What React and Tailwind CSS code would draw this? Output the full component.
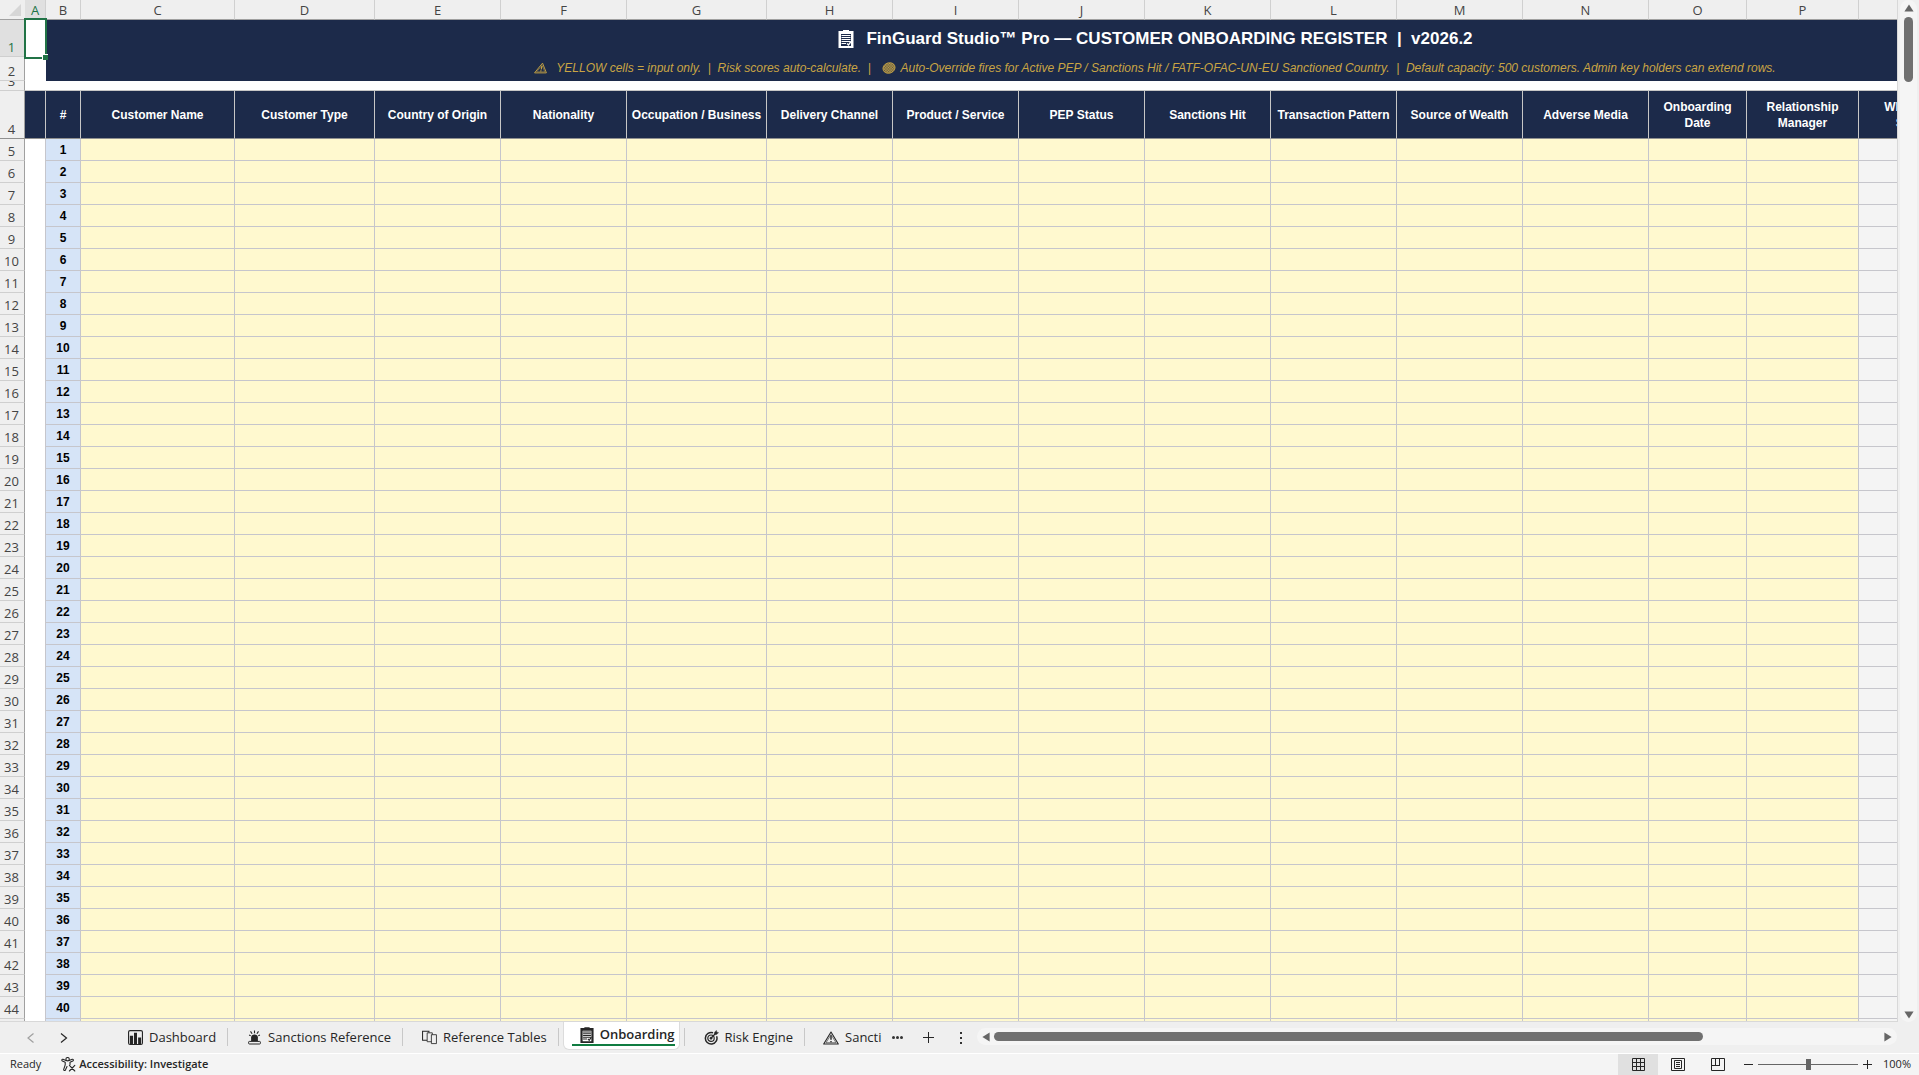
import React, { useState } from "react";
import clsx from "clsx";

const columns = [
    { letter: "A", label: "", width: "w-[21px]" },
    { letter: "B", label: "#", width: "w-[35px]" },
    { letter: "C", label: "Customer Name", width: "w-[154px]" },
    { letter: "D", label: "Customer Type", width: "w-[140px]" },
    { letter: "E", label: "Country of Origin", width: "w-[126px]" },
    { letter: "F", label: "Nationality", width: "w-[126px]" },
    { letter: "G", label: "Occupation / Business", width: "w-[140px]" },
    { letter: "H", label: "Delivery Channel", width: "w-[126px]" },
    { letter: "I", label: "Product / Service", width: "w-[126px]" },
    { letter: "J", label: "PEP Status", width: "w-[126px]" },
    { letter: "K", label: "Sanctions Hit", width: "w-[126px]" },
    { letter: "L", label: "Transaction Pattern", width: "w-[126px]" },
    { letter: "M", label: "Source of Wealth", width: "w-[126px]" },
    { letter: "N", label: "Adverse Media", width: "w-[126px]" },
    { letter: "O", label: "Onboarding\nDate", width: "w-[98px]" },
    { letter: "P", label: "Relationship\nManager", width: "w-[112px]" },
    { letter: "", label: "WL Match\nScore", width: "w-[108px]", computed: true },
    { letter: "", label: "", width: "w-[298px]", computed: true },
];

const customers = Array.from({ length: 41 }, (_, i) => i + 1);

/* Icons */
const ClipboardIcon = ({ className, paper = "none" }) => (
    <svg viewBox="0 0 16 18" className={className} aria-hidden="true">
        <path fill="currentColor" fillRule="evenodd" d="M.5 1H5V0h6v1h4.500v17H.5zM3 4v12h10V4z" />
        <path fill={paper} d="M3 4h10v12H3z" />
        <path stroke="currentColor" strokeWidth="1.2" d="M3.500 5.500h9M3.500 7.500h9M3.500 9.500h9M3.500 11.500h9M3.500 13.500h4.500" />
        <path stroke="currentColor" strokeWidth="1.300" fill="none" d="M9 13.500l1.500 1.500L13 11.500" />
    </svg>
);

const WarningIcon = ({ className }) => (
    <svg viewBox="0 0 16 14" className={className} fill="none" stroke="currentColor" aria-hidden="true">
        <path strokeWidth="1.1" strokeLinejoin="round" d="M8 1L15.3 13H.7z" />
        <path strokeWidth=".6" strokeLinejoin="round" d="M8 3.6L13 11.7H3z" />
        <path strokeWidth="1.4" d="M8 4.6v4.2M8 9.9v1.4" />
    </svg>
);

const DiscIcon = ({ className }) => (
    <svg viewBox="0 0 14 12" className={className} aria-hidden="true">
        <defs>
            <pattern id="hatch" width="2" height="2" patternUnits="userSpaceOnUse" patternTransform="rotate(35)">
                <path d="M0 0h1v1H0zM1 1h1v1H1z" fill="currentColor" />
            </pattern>
        </defs>
        <ellipse cx="7" cy="6" rx="6.2" ry="5.2" fill="currentColor" fillOpacity=".35" transform="rotate(-20 7 6)" />
        <ellipse cx="7" cy="6" rx="6.2" ry="5.2" fill="url(#hatch)" stroke="currentColor" strokeWidth=".7" transform="rotate(-20 7 6)" />
    </svg>
);

const ChartIcon = ({ className }) => (
    <svg viewBox="0 0 16 16" className={className} aria-hidden="true">
        <rect x=".6" y=".6" width="14.8" height="14.8" rx="1.6" fill="none" stroke="currentColor" strokeWidth="1.2" />
        <path fill="currentColor" d="M2 6h3.4v9H2zM6.4 3h3.2v12H6.4zM10.8 8H14v7h-3.2z" />
    </svg>
);

const SirenIcon = ({ className }) => (
    <svg viewBox="0 0 14 15" className={className} aria-hidden="true">
        <path fill="currentColor" d="M3.6 11V7.6C3.6 5.6 5 4.4 7 4.4s3.4 1.2 3.4 3.2V11z" />
        <rect x="1.1" y="11.4" width="11.8" height="2.6" rx=".8" fill="none" stroke="currentColor" />
        <path stroke="currentColor" strokeWidth="1.1" d="M7 .4v2.8M3 1.4l1.6 2.4M11 1.4L9.4 3.8M1.6 5l1.600.8M12.400 5l-1.600.8" />
    </svg>
);

const CardsIcon = ({ className }) => (
    <svg viewBox="0 0 16 15" className={className} fill="none" stroke="currentColor" aria-hidden="true">
        <path strokeWidth="1.1" d="M5.500 10.500H.6V.8h6.800v1.700" />
        <path strokeWidth=".9" fill="#efefef" d="M5.500 2.500h5.500v9.500H5.500z" />
        <path strokeWidth=".9" fill="#efefef" d="M10 4.500h5.400v9.500H10z" />
    </svg>
);

const TargetIcon = ({ className }) => (
    <svg viewBox="0 0 15 15" className={className} fill="none" stroke="currentColor" aria-hidden="true">
        <path strokeWidth="1.5" d="M12.6 6.2A5.8 5.8 0 1 1 9 2.8" />
        <circle cx="7" cy="8.2" r="3.2" strokeWidth="1.2" />
        <circle cx="7" cy="8.2" r="1" fill="currentColor" />
        <path strokeWidth="1.3" d="M7 8.2l4.4-4.6" />
        <path fill="currentColor" strokeWidth=".4" d="M10.4 4.6V2.4L12.4.4l.4 1.8 1.8.4-2 2z" />
    </svg>
);

const AccessibilityIcon = () => (
    <svg viewBox="0 0 15 15" className="h-[15px] w-[15px]" fill="none" stroke="currentColor" strokeWidth="1.1" strokeLinejoin="round" strokeLinecap="round" aria-hidden="true">
        <circle cx="6.6" cy="2.2" r="1.7" />
        <path d="M5 3.4L2 2.3C.9 2 .4 3.4 1.4 3.9l2.8 1.3v2.6l-1.5 4.6c-.2 1.1 1.2 1.6 1.7.6L6 9.6M8.2 3.4l3-1.1c1.1-.3 1.6 1.1.6 1.6L9 5.2v2.2" />
        <path d="M8.4 8.4l5.4 5.6M13.8 8.4L8.4 14" />
    </svg>
);

const GridViewIcon = () => (
    <svg viewBox="0 0 13 13" className="h-[13px] w-[13px]" fill="none" stroke="currentColor" aria-hidden="true">
        <path d="M.5.5h12v12H.5zM4.5 0v13M8.5 0v13M0 4.5h13M0 8.5h13" />
    </svg>
);

const PageViewIcon = () => (
    <svg viewBox="0 0 14 13" className="h-[13px] w-[14px]" fill="none" stroke="currentColor" aria-hidden="true">
        <path d="M.5.5h13v12H.5zM3.5 2.5h7v8h-7zM5 4.5h4M5 6.5h4M5 8.5h4" />
    </svg>
);

const BreakViewIcon = () => (
    <svg viewBox="0 0 14 13" className="h-[13px] w-[14px]" fill="none" stroke="currentColor" aria-hidden="true">
        <path d="M.5.5h13v12H.5zM4.5 0v7.5M.5 7.5h8M8.5 0v8" />
    </svg>
);

const Triangle = ({ className }) => (
    <svg viewBox="0 0 10 8" className={clsx("h-2 w-[10px] text-[#666]", className)} aria-hidden="true">
        <path fill="currentColor" d="M5 0.4L9.6 7.6H.4z" />
    </svg>
);

const sheets = [
    { name: "Dashboard", icon: ChartIcon },
    { name: "Sanctions Reference", icon: SirenIcon },
    { name: "Reference Tables", icon: CardsIcon },
    { name: "Onboarding", icon: ClipboardIcon },
    { name: "Risk Engine", icon: TargetIcon },
];

const RowNumber = ({ children, active, className }) => (
    <th
        scope="row"
        className={clsx(
            "border-r border-b border-r-[#a0a0a0] p-0 pr-px pb-px text-center align-bottom font-['Open_Sans',sans-serif] text-[13px] leading-4 font-normal",
            active ? "bg-[#e0e0e0] text-[#217346]" : "bg-[#efefef] text-[#444]",
            className || "border-b-[#cfcfcf]"
        )}
    >
        {children}
    </th>
);

const Sheet = () => (
    <table className="w-[2265px] table-fixed border-separate border-spacing-0 bg-white font-['Liberation_Sans',sans-serif]">
        <colgroup>
            <col className="w-[25px]" />
            {columns.map((c, i) => (
                <col key={i} className={c.width} />
            ))}
        </colgroup>
        <thead>
            <tr className="h-5">
                <th className="border-b border-[#a0a0a0] bg-[#efefef] p-0">
                    <svg viewBox="0 0 12 12" className="ml-[9px] h-3 w-3" aria-hidden="true">
                        <path fill="#d6d6d6" d="M12 0v12H0z" />
                    </svg>
                </th>
                {columns.map((c, i) => (
                    <th
                        key={i}
                        scope="col"
                        className={clsx(
                            "border-r border-b border-r-[#d0d0d0] border-b-[#a0a0a0] p-0 font-['Open_Sans',sans-serif] text-[13px] leading-4 font-normal",
                            c.letter === "A" ? "bg-[#e0e0e0] text-[#217346]" : "bg-[#efefef] text-[#444]"
                        )}
                    >
                        {c.letter}
                    </th>
                ))}
            </tr>
        </thead>
        <tbody>
            <tr className="h-[37px]">
                <RowNumber active>1</RowNumber>
                <td className="relative p-0">
                    {/* Active cell outline */}
                    <div className="absolute -inset-x-[1px] -inset-y-[2px] border-2 border-[#217346]">
                        <span className="absolute -right-[3px] -bottom-[3px] h-[6px] w-[6px] border-t border-l border-white bg-[#217346]" />
                    </div>
                </td>
                <td colSpan={17} className="bg-[#1c2a4a] p-0 text-[17px] leading-5 font-bold text-white">
                    <div className="flex items-center justify-center">
                        <ClipboardIcon className="mr-3 h-[18px] w-4" paper="#1c2a4a" />
                        <span className="whitespace-pre">FinGuard Studio™ Pro — CUSTOMER ONBOARDING REGISTER  |  v2026.2</span>
                    </div>
                </td>
            </tr>
            <tr className="h-6">
                <RowNumber>2</RowNumber>
                <td className="p-0" />
                <td colSpan={17} className="bg-[#1c2a4a] p-0 pb-[2px] text-xs text-[#c9a544] italic">
                    <div className="flex items-center justify-center whitespace-pre">
                        <WarningIcon className="mr-2 h-3 w-[13px] -skew-x-12" />
                        <span>YELLOW cells = input only.  |  Risk scores auto-calculate.  |  </span>
                        <DiscIcon className="mr-1 ml-[5px] h-3 w-[14px]" />
                        <span>Auto-Override fires for Active PEP / Sanctions Hit / FATF-OFAC-UN-EU Sanctioned Country.  |  Default capacity: 500 customers. Admin key holders can extend rows.</span>
                    </div>
                </td>
            </tr>
            <tr className="h-[10px]">
                <RowNumber>
                    <div className="flex h-2 items-end justify-center overflow-hidden">3</div>
                </RowNumber>
                <td colSpan={18} className="border-b border-[#c6c6c6] p-0" />
            </tr>
            <tr className="h-12">
                <RowNumber className="border-b-[#909090]">4</RowNumber>
                {columns.map((c, i) => (
                    <th
                        key={i}
                        className="border-r border-b border-r-[#c6c6c6] border-b-[#909090] bg-[#1c2a4a] p-0 text-xs leading-4 font-bold whitespace-pre text-white"
                    >
                        {c.label}
                    </th>
                ))}
            </tr>
            {customers.map((n) => (
                <tr key={n} className="h-[22px]">
                    <RowNumber>{n + 4}</RowNumber>
                    {columns.map((c, i) => {
                        if (c.letter === "A") return <td key={i} className="border-r border-[#c6c6cc] p-0" />;
                        if (c.letter === "B")
                            return (
                                <td key={i} className="border-r border-b border-[#c6c6cc] bg-[#d6e4f7] p-0 text-center text-xs leading-4 font-bold text-black">
                                    {n}
                                </td>
                            );
                        return (
                            <td
                                key={i}
                                className={clsx("border-r border-b border-[#c6c6cc] p-0", c.computed ? "bg-[#f4f4f4]" : "bg-[#fff9cf]")}
                            />
                        );
                    })}
                </tr>
            ))}
        </tbody>
    </table>
);

const SheetTab = ({ sheet, active, onSelect }) => {
    const Icon = sheet.icon;
    if (active) {
        return (
            <button
                onClick={onSelect}
                className="mx-1 flex h-7 shrink-0 items-start rounded-b-md border-x border-b border-[#dcdcdc] bg-white pr-1 pl-2 font-semibold"
            >
                <span className="flex h-6 items-center gap-[6px] border-b-2 border-[#107c41] pt-1 pl-2">
                    <Icon className="h-4 w-[14px]" />
                    {sheet.name}
                </span>
            </button>
        );
    }
    return (
        <button onClick={onSelect} className="my-auto flex shrink-0 items-center gap-[6px] pr-[11px] pl-[19px]">
            <Icon className="h-[15px] w-[15px]" />
            {sheet.name}
        </button>
    );
};

const TabBar = () => {
    const [current, setCurrent] = useState("Onboarding");

    return (
        <div className="flex h-[31px] shrink-0 items-start bg-[#efefef] pr-[22px] text-[13px] text-[#262626]">
            <div className="flex h-full w-[109px] shrink-0 items-center gap-[25px] pl-[27px]">
                <button aria-label="Previous sheet" className="text-[#a0a0a0]">
                    <svg viewBox="0 0 8 10" className="h-[10px] w-2" fill="none" stroke="currentColor" strokeWidth="1.2">
                        <path d="M6.5.5L1 5l5.5 4.5" />
                    </svg>
                </button>
                <button aria-label="Next sheet">
                    <svg viewBox="0 0 8 10" className="h-[10px] w-2" fill="none" stroke="currentColor" strokeWidth="1.2">
                        <path d="M1 .5L6.5 5 1 9.5" />
                    </svg>
                </button>
            </div>
            <nav className="flex h-full shrink-0">
                {sheets.map((s) => (
                    <React.Fragment key={s.name}>
                        <SheetTab sheet={s} active={s.name === current} onSelect={() => setCurrent(s.name)} />
                        <span className="mt-[6px] h-[18px] w-px bg-[#c8c8c8]" />
                    </React.Fragment>
                ))}
                <button className="my-auto flex items-center gap-[6px] pl-[18px]">
                    <WarningIcon className="h-[14px] w-4" />
                    Sancti
                </button>
            </nav>
            <button aria-label="More sheets" className="ml-[10px] flex h-full items-center gap-px">
                <span className="h-[3px] w-[3px] rounded-full bg-[#333]" />
                <span className="h-[3px] w-[3px] rounded-full bg-[#333]" />
                <span className="h-[3px] w-[3px] rounded-full bg-[#333]" />
            </button>
            <button aria-label="New sheet" className="ml-5 flex h-full items-center">
                <svg viewBox="0 0 11 11" className="h-[11px] w-[11px]" stroke="currentColor">
                    <path d="M5.5 0v11M0 5.5h11" />
                </svg>
            </button>
            <span className="ml-[26px] flex h-full flex-col items-center justify-center gap-[3px]">
                <span className="h-[2px] w-[2px] bg-[#333]" />
                <span className="h-[2px] w-[2px] bg-[#333]" />
                <span className="h-[2px] w-[2px] bg-[#333]" />
            </span>
            {/* Horizontal scrollbar */}
            <div className="mt-[6px] ml-[15px] flex h-[17px] min-w-0 flex-1 items-center rounded-full bg-[#f5f5f5] px-1">
                <Triangle className="-rotate-90" />
                <div className="mx-[3px] flex-1">
                    <div className="h-[9px] w-4/5 rounded-full bg-[#707070]" />
                </div>
                <Triangle className="rotate-90" />
            </div>
        </div>
    );
};

const StatusBar = () => {
    const [zoom, setZoom] = useState(100);

    return (
        <footer className="flex h-[22px] shrink-0 items-center border-t border-white bg-[#f4f4f4] pr-2 pl-[10px] text-[11px] text-[#262626]">
            <span>Ready</span>
            <button className="ml-5 flex items-center gap-[3px] font-semibold">
                <AccessibilityIcon />
                Accessibility: Investigate
            </button>
            <div className="ml-auto flex h-full">
                <button aria-label="Normal view" className="flex w-10 items-center justify-center bg-[#e0e0e0]">
                    <GridViewIcon />
                </button>
                <button aria-label="Page layout" className="flex w-10 items-center justify-center">
                    <PageViewIcon />
                </button>
                <button aria-label="Page break preview" className="flex w-10 items-center justify-center">
                    <BreakViewIcon />
                </button>
            </div>
            <button aria-label="Zoom out" onClick={() => setZoom(Math.max(0, zoom - 10))} className="ml-[6px]">
                <svg viewBox="0 0 9 9" className="h-[9px] w-[9px]" stroke="currentColor">
                    <path d="M0 4.5h9" />
                </svg>
            </button>
            <input
                type="range"
                aria-label="Zoom"
                min="0"
                max="200"
                value={zoom}
                onChange={(e) => setZoom(Number(e.target.value))}
                className="mx-[5px] h-px w-[100px] appearance-none bg-[#666] [&::-webkit-slider-thumb]:h-[11px] [&::-webkit-slider-thumb]:w-[5px] [&::-webkit-slider-thumb]:appearance-none [&::-webkit-slider-thumb]:bg-[#666]"
            />
            <button aria-label="Zoom in" onClick={() => setZoom(Math.min(200, zoom + 10))}>
                <svg viewBox="0 0 9 9" className="h-[9px] w-[9px]" stroke="currentColor">
                    <path d="M4.5 0v9M0 4.5h9" />
                </svg>
            </button>
            <span className="ml-[11px] w-7 text-right">{zoom}%</span>
        </footer>
    );
};

const App = () => {
    return (
        <div className="flex h-screen flex-col overflow-hidden bg-[#efefef] font-['Open_Sans',sans-serif]">
            <main className="flex min-h-0 flex-1">
                <div className="min-w-0 flex-1 overflow-hidden border-r border-b border-[#d8d8d8]">
                    <Sheet />
                </div>
                {/* Vertical scrollbar */}
                <div className="mr-[2px] ml-[2px] flex w-[17px] flex-col items-center rounded-full bg-[#f5f5f5] pt-1 pb-[3px]">
                    <Triangle />
                    <div className="mt-[5px] flex-1">
                        <div className="h-[65px] w-[9px] rounded-full bg-[#707070]" />
                    </div>
                    <Triangle className="rotate-180" />
                </div>
            </main>
            <TabBar />
            <StatusBar />
        </div>
    );
};

export default App;
